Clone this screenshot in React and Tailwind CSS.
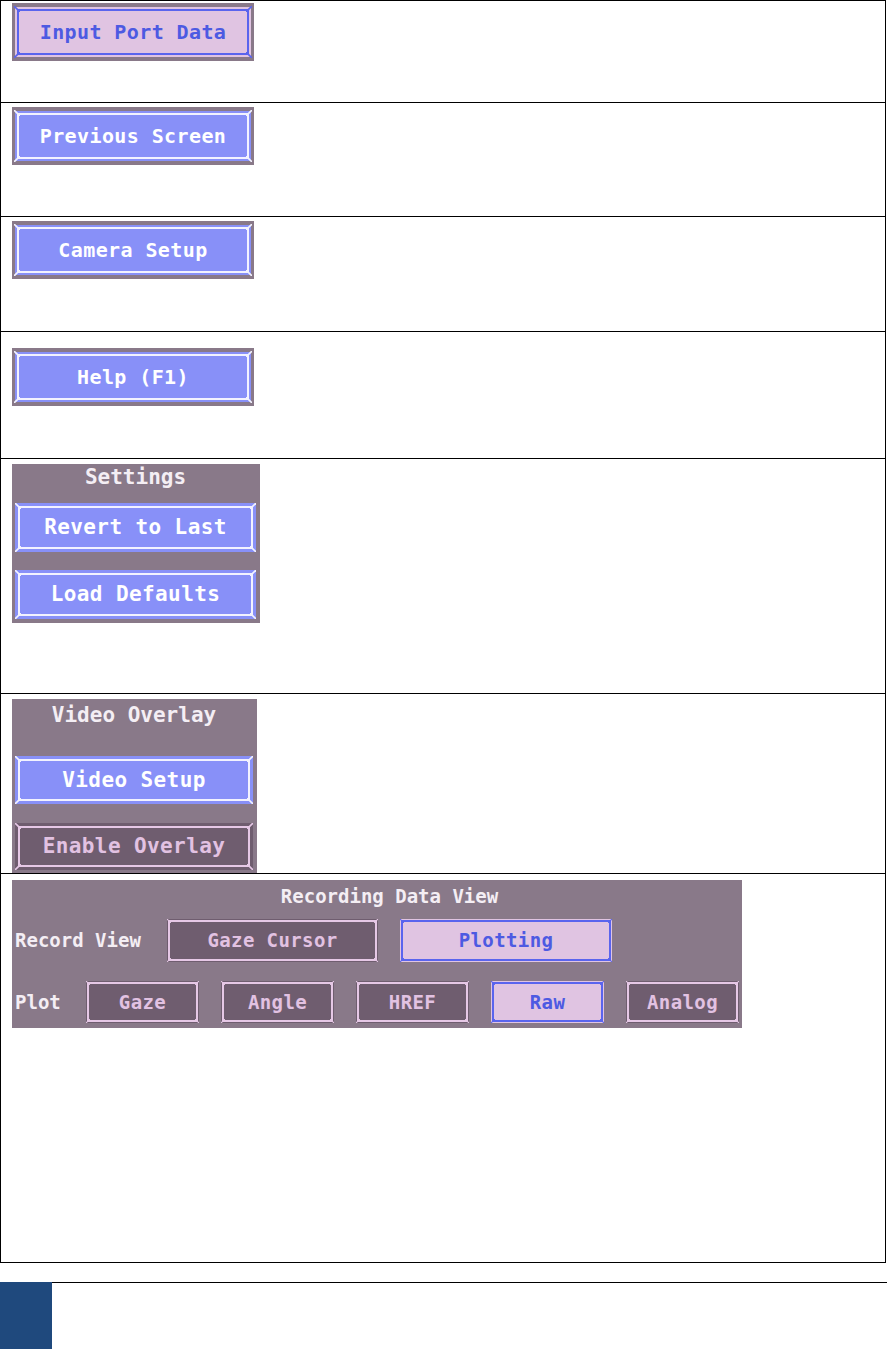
import React from 'react';

const FONT = { fontFamily: '"DejaVu Sans Mono", "Liberation Mono", monospace' };

// colour sets for the three button looks of the old tracker screen
const LOOKS = {
  blue: { fill: 'bg-[#8890f8]', line: 'border-[#f2f2ff]', text: 'text-white', stroke: '#f2f2ff' },
  pink: { fill: 'bg-[#e0c4e2]', line: 'border-[#5a64ee]', text: 'text-[#4d5ae2]', stroke: '#5a64ee' },
  dark: { fill: 'bg-[#6f5d6f]', line: 'border-[#e6c8e6]', text: 'text-[#e2c2e2]', stroke: '#e6c8e6' },
};

function Corners({ stroke, wide }) {
  // little diagonal notches running from the frame line out to the fill corner
  const s = wide ? 'w-[6px] h-[6px]' : 'w-[4px] h-[4px]';
  const pos = wide
    ? [
        ['-top-[5px] -left-[5px]', 'M0 0 L6 6'],
        ['-top-[5px] -right-[5px]', 'M6 0 L0 6'],
        ['-bottom-[5px] -left-[5px]', 'M0 6 L6 0'],
        ['-bottom-[5px] -right-[5px]', 'M6 6 L0 0'],
      ]
    : [
        ['-top-[3px] -left-[3px]', 'M0 0 L6 6'],
        ['-top-[3px] -right-[3px]', 'M6 0 L0 6'],
        ['-bottom-[3px] -left-[3px]', 'M0 6 L6 0'],
        ['-bottom-[3px] -right-[3px]', 'M6 6 L0 0'],
      ];
  return (
    <>
      {pos.map(([cls, d], i) => (
        <svg key={i} viewBox="0 0 6 6" className={`absolute ${s} ${cls}`}>
          <path d={d} stroke={stroke} strokeWidth="1.6" fill="none" />
        </svg>
      ))}
    </>
  );
}

function Btn({ look = 'blue', className = '', size = 'text-[20px]', pad = 'p-[3px]', children }) {
  const l = LOOKS[look];
  return (
    <div className={`${l.fill} ${pad} ${className}`}>
      <div className={`relative h-full w-full border-2 ${l.line} flex items-center justify-center`}>
        <Corners stroke={l.stroke} wide={pad !== 'p-[1px]'} />
        <span className={`${l.text} ${size} font-bold leading-none tracking-[0.4px]`} style={FONT}>
          {children}
        </span>
      </div>
    </div>
  );
}

function FramedBtn({ look, children }) {
  return (
    <div className="bg-[#897989] px-[3px] py-[4px] w-[242px] h-[58px]">
      <Btn look={look} pad="p-[2px]" className="h-full">
        {children}
      </Btn>
    </div>
  );
}

function Row({ h, pt, first, children }) {
  return (
    <div className={`${h} ${pt} pl-[11px] ${first ? '' : 'border-t border-black'}`}>
      {children}
    </div>
  );
}

export default function App() {
  return (
    <div className="w-[887px] h-[1349px] bg-white overflow-hidden" style={FONT}>
      <div className="w-[886px] border-l border-r border-b border-black">
        <Row h="h-[102px]" pt="pt-[3px]" first>
          <div className="border-t border-black -mt-[3px] mb-[2px] -ml-[11px] w-[885px]" />
          <FramedBtn look="pink">Input Port Data</FramedBtn>
        </Row>

        <Row h="h-[114px]" pt="pt-[4px]">
          <FramedBtn look="blue">Previous Screen</FramedBtn>
        </Row>

        <Row h="h-[115px]" pt="pt-[4px]">
          <FramedBtn look="blue">Camera Setup</FramedBtn>
        </Row>

        <Row h="h-[127px]" pt="pt-[16px]">
          <FramedBtn look="blue">Help (F1)</FramedBtn>
        </Row>

        {/* Settings */}
        <Row h="h-[235px]" pt="pt-[5px]">
          <div className="bg-[#897989] w-[248px] h-[159px] pl-[3px] pr-[4px] flex flex-col">
            <div className="h-[39px] flex items-center justify-center pb-[12px] text-[21px] font-bold text-[#f4eef4] leading-none">
              Settings
            </div>
            <Btn look="blue" className="h-[49px]" size="text-[21px]">Revert to Last</Btn>
            <div className="h-[18px]" />
            <Btn look="blue" className="h-[49px]" size="text-[21px]">Load Defaults</Btn>
          </div>
        </Row>

        {/* Video Overlay */}
        <Row h="h-[180px]" pt="pt-[5px]">
          <div className="bg-[#897989] w-[245px] h-[174px] pl-[3px] pr-[4px] flex flex-col">
            <div className="h-[57px] pt-[6px] flex justify-center text-[21px] font-bold text-[#f4eef4] leading-none">
              Video Overlay
            </div>
            <Btn look="blue" className="h-[48px]" size="text-[21px]">Video Setup</Btn>
            <div className="h-[19px]" />
            <Btn look="dark" className="h-[47px]" size="text-[21px]">Enable Overlay</Btn>
          </div>
        </Row>

        {/* Recording Data View */}
        <Row h="h-[389px]" pt="pt-[6px]">
          <div className="bg-[#897989] w-[730px] h-[148px] pl-[3px] flex flex-col">
            <div className="h-[39px] pl-[22px] flex justify-center pt-[7px] text-[19px] font-bold text-[#f4eef4] leading-none">
              Recording Data View
            </div>
            <div className="flex items-center h-[43px]">
              <div className="w-[152px] text-[19px] font-bold text-[#f4eef4] leading-none">Record View</div>
              <Btn look="dark" pad="p-[1px]" className="w-[211px] h-[43px]" size="text-[19px]">Gaze Cursor</Btn>
              <div className="w-[22px]" />
              <Btn look="pink" pad="p-[1px]" className="w-[212px] h-[43px]" size="text-[19px]">Plotting</Btn>
            </div>
            <div className="h-[19px]" />
            <div className="flex items-center h-[42px] gap-[22px]">
              <div className="w-[49px] text-[19px] font-bold text-[#f4eef4] leading-none">Plot</div>
              <Btn look="dark" pad="p-[1px]" className="w-[113px] h-[42px]" size="text-[19px]">Gaze</Btn>
              <Btn look="dark" pad="p-[1px]" className="w-[113px] h-[42px]" size="text-[19px]">Angle</Btn>
              <Btn look="dark" pad="p-[1px]" className="w-[113px] h-[42px]" size="text-[19px]">HREF</Btn>
              <Btn look="pink" pad="p-[1px]" className="w-[113px] h-[42px]" size="text-[19px]">Raw</Btn>
              <Btn look="dark" pad="p-[1px]" className="w-[113px] h-[42px]" size="text-[19px]">Analog</Btn>
            </div>
          </div>
        </Row>
      </div>

      {/* page footer strip */}
      <div className="flex mt-[19px]">
        <div className="w-[52px] h-[67px] bg-[#1f497d]" />
        <div className="flex-1 border-t border-black" />
      </div>
    </div>
  );
}
